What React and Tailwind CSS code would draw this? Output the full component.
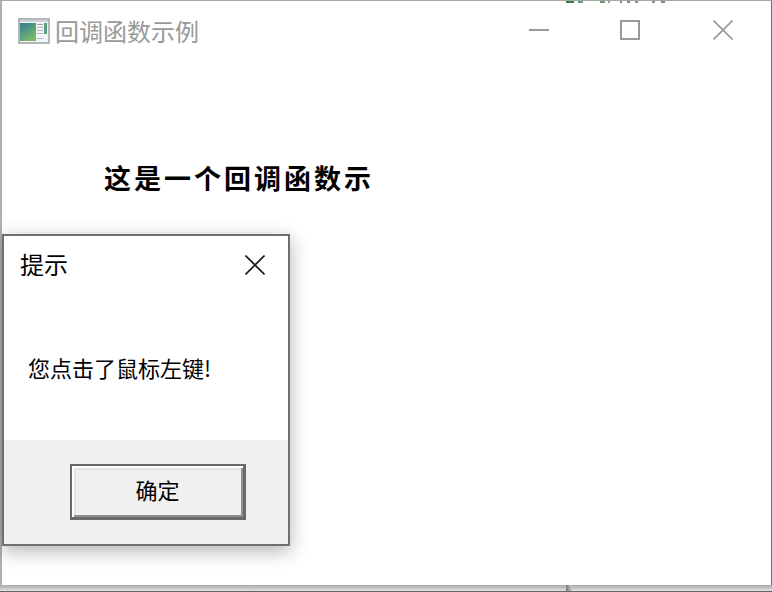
import React from "react"

const cjk = { fontFamily: '"Noto Sans CJK SC", "Liberation Sans", sans-serif' }

// bits of the window behind that stick out above the title bar
const behindBits = [
    "left-[566px] w-[8px] bg-[#3f7a4a]",
    "left-[578px] w-[5px] bg-[#5f9a90]",
    "left-[600px] w-[5px] bg-[#6f9a70]",
    "left-[608px] w-[2px] bg-[#8aa0a0]",
    "left-[620px] w-[2px] bg-[#7a8a70]",
    "left-[627px] w-[3px] bg-[#6f8f90]",
    "left-[635px] w-[3px] bg-[#7f9a80]",
    "left-[652px] w-[3px] bg-[#7f9a80]",
    "left-[661px] w-[4px] bg-[#6f8f90]",
]

const AppIcon = () => (
    <svg width="32" height="26" viewBox="0 0 32 26" className="shrink-0">
        <defs>
            <linearGradient id="pane" x1="0" y1="0" x2="0.6" y2="1">
                <stop offset="0" stopColor="#2f7a96" />
                <stop offset="1" stopColor="#78bc68" />
            </linearGradient>
        </defs>
        <rect x="1" y="1" width="30" height="24" fill="#f2f3f4" stroke="#b4b6b8" strokeWidth="2" />
        <rect x="2" y="2" width="28" height="2" fill="#ccd2d8" />
        <rect x="2" y="5" width="16" height="18" fill="url(#pane)" />
        <rect x="19" y="6" width="6" height="1" fill="#a0a0a0" />
        <rect x="19" y="9" width="6" height="1" fill="#b8b8b8" />
        <rect x="19" y="12" width="6" height="1" fill="#b8b8b8" />
        <rect x="19" y="15" width="6" height="1" fill="#b8b8b8" />
        <rect x="19" y="20" width="6" height="1" fill="#b8b8b8" />
        <rect x="26" y="5" width="3" height="11" fill="#5a9c84" />
    </svg>
)

const CloseIcon = ({ color }) => (
    <svg width="20" height="20" viewBox="0 0 20 20">
        <path d="M0.5 0.5L19.5 19.5M19.5 0.5L0.5 19.5" stroke={color} strokeWidth="1.6" fill="none" />
    </svg>
)

const App = () => {
    return (
        <div className="relative w-[772px] h-[592px] overflow-hidden bg-white" style={cjk}>
            <div className="flex flex-col h-[585px] border-t border-l-2 border-r border-t-[#a8a8a8] border-l-[#b0b0b0] border-r-[#707070]">
                <div className="flex items-center h-[60px] pl-[16px] shrink-0">
                    <AppIcon />
                    <span className="ml-[5px] text-[24px] leading-none text-[#999999]">回调函数示例</span>
                    <div className="ml-auto flex items-center mr-[38px] mb-[2px]">
                        <div className="w-[20px] h-[2px] bg-[#999999]" />
                        <div className="ml-[71px] w-[20px] h-[20px] border-2 border-[#999999]" />
                        <div className="ml-[73px] flex">
                            <CloseIcon color="#999999" />
                        </div>
                    </div>
                </div>
                <div className="pl-[102px] pt-[97px]">
                    <h1 className="text-[27px] leading-[40px] font-bold tracking-[3px] text-black">这是一个回调函数示</h1>
                </div>
            </div>
            <div className="flex h-[7px]">
                <div className="w-[566px] h-full border-b border-b-[#666666] bg-gradient-to-b from-[#a8a8a8] to-[#e4e4e4]" />
                <div className="w-[6px] h-full border-b border-b-[#666666] bg-gradient-to-r from-[#777777] to-[#cfcfcf]" />
                <div className="flex-1 h-full border-b border-b-[#666666] bg-gradient-to-b from-[#a8a8a8] to-[#e4e4e4]" />
            </div>

            {behindBits.map((bit) => (
                <div key={bit} className={`absolute top-[1px] h-[2px] ${bit}`} />
            ))}

            <div className="absolute left-[2px] top-[234px] w-[288px] h-[312px] flex flex-col bg-white border-2 border-[#707070] shadow-[0_5px_18px_rgba(0,0,0,0.3)]">
                <div className="flex items-center justify-between h-[58px] pl-[16px] pr-[23px] shrink-0">
                    <span className="text-[24px] leading-none text-black -mt-[2px]">提示</span>
                    <CloseIcon color="#1a1a1a" />
                </div>
                <div className="flex-1 pl-[24px] pt-[57px]">
                    <p className="text-[22px] leading-[32px] text-black">您点击了鼠标左键!</p>
                </div>
                <div className="flex items-center h-[104px] pl-[66px] bg-[#f0f0f0] shrink-0">
                    <button className="w-[176px] h-[56px] pb-[4px] flex items-center justify-center bg-[#f0f0f0] text-[22px] text-black border-t-2 border-l-2 border-r-[3px] border-b-[3px] border-[#696969] shadow-[inset_2px_2px_0_#ffffff,inset_-2px_-2px_0_#8f8f8f,inset_4px_4px_0_#e3e3e3]">
                        确定
                    </button>
                </div>
            </div>
        </div>
    )
}

export default App
